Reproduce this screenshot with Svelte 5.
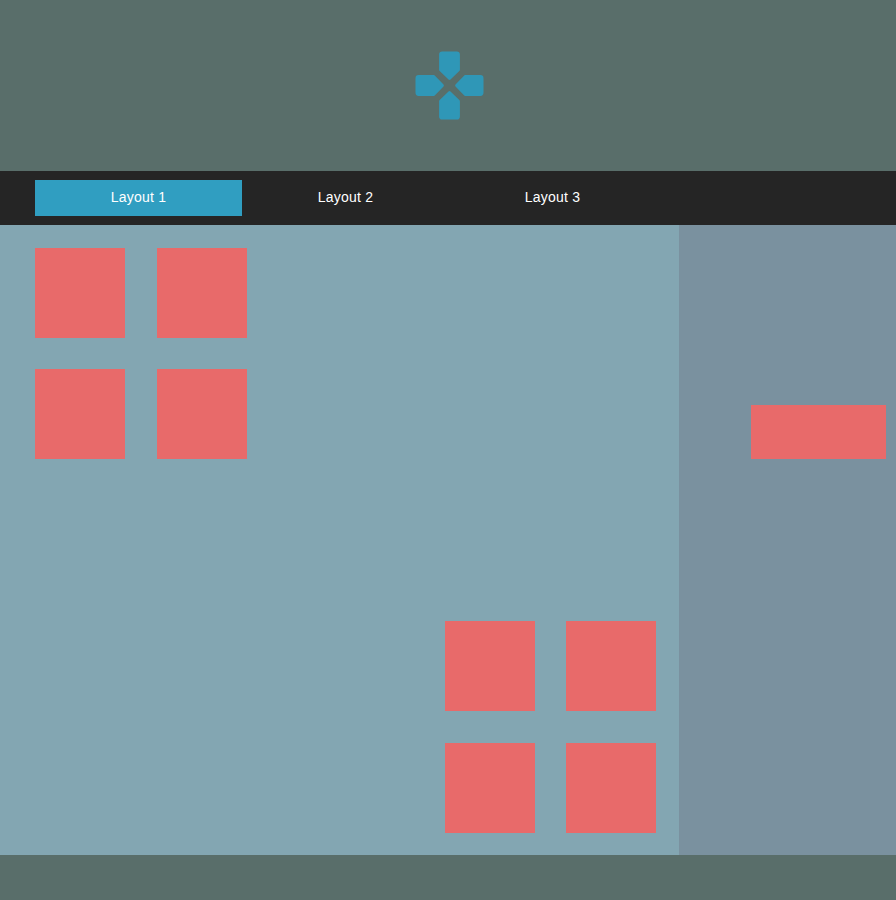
<script>
  const tabs = ['Layout 1', 'Layout 2', 'Layout 3'];
  let active = $state(0);
  const arm = 'M-7.3-34H7.3Q10.4-34 10.4-30.9V-15.7Q10.4-15 9.8-14.5L1-6Q0-5.2-1-6L-9.8-14.5Q-10.4-15-10.4-15.7V-30.9Q-10.4-34-7.3-34Z';
</script>

<div class="page">
  <header>
    <svg width="71" height="71" viewBox="-35.5 -35.5 71 71" aria-hidden="true">
      {#each [0, 90, 180, 270] as angle}
        <path d={arm} transform="rotate({angle})" />
      {/each}
    </svg>
  </header>

  <nav>
    {#each tabs as tab, i}
      <button class:active={active === i} onclick={() => (active = i)}>{tab}</button>
    {/each}
  </nav>

  <main>
    <section class="content">
      <div class="group first">
        {#each Array(4) as _}<div class="box"></div>{/each}
      </div>
      <div class="group last">
        {#each Array(4) as _}<div class="box"></div>{/each}
      </div>
    </section>
    <aside><div class="panel"></div></aside>
  </main>

  <footer></footer>
</div>

<style>
  :global(body) {
    margin: 0;
  }

  .page {
    display: flex;
    flex-direction: column;
    height: 900px;
    background: #596e6a;
    font-family: "Liberation Sans", Arial, sans-serif;
  }

  header {
    display: flex;
    justify-content: center;
    align-items: center;
    box-sizing: border-box;
    height: 171px;
    padding-left: 3px;
  }

  header svg {
    fill: #2f97b7;
  }

  nav {
    display: flex;
    align-items: center;
    height: 54px;
    padding-left: 35px;
    background: #252525;
  }

  button {
    width: 207px;
    height: 36px;
    padding: 0 0 2px;
    border: 0;
    background: transparent;
    color: #fff;
    font: 14px "Liberation Sans", Arial, sans-serif;
    letter-spacing: 0.2px;
    text-align: center;
    cursor: pointer;
  }

  button.active {
    background: #309ec1;
  }

  main {
    display: flex;
    height: 630px;
  }

  .content {
    display: flex;
    flex-direction: column;
    justify-content: space-between;
    box-sizing: border-box;
    width: 679px;
    padding: 23px 23px 22px 35px;
    background: #83a6b2;
  }

  .group {
    display: grid;
    grid-template-columns: 90px 90px;
    grid-auto-rows: 90px;
  }

  .first {
    gap: 31px 32px;
  }

  .last {
    align-self: flex-end;
    gap: 32px 31px;
  }

  .box,
  .panel {
    background: #e86a6a;
  }

  aside {
    display: flex;
    flex: 1;
    justify-content: flex-end;
    padding: 180px 10px 0 0;
    background: #7a919f;
  }

  .panel {
    width: 135px;
    height: 54px;
  }

  footer {
    flex: 1;
  }
</style>
